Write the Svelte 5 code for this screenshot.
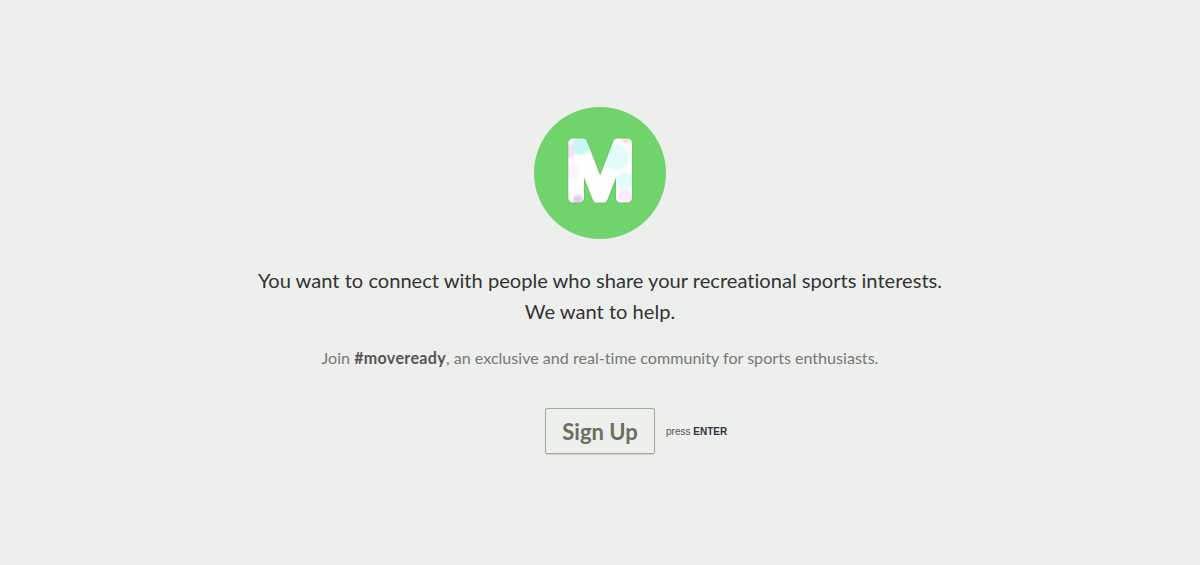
<script lang="ts">
  // Pastel blobs that show through the logo letter
  const blobs = [
    { x: 35, y: 44, r: 7, fill: "#f8e0fb" },
    { x: 47, y: 39, r: 9, fill: "#c6f7f3" },
    { x: 38, y: 64, r: 8, fill: "#fef2fe" },
    { x: 82, y: 50, r: 13, fill: "#e2fcfa" },
    { x: 91, y: 74, r: 9, fill: "#e4fbfb" },
    { x: 44, y: 93, r: 5, fill: "#e0cdf6" },
    { x: 92, y: 91, r: 8, fill: "#fdeafc" },
    { x: 92, y: 32, r: 4, fill: "#fbdfcc" },
    { x: 98, y: 44, r: 6, fill: "#fff6fd" },
  ];
</script>

<main class="page">
  <svg class="logo" viewBox="0 0 132 132" role="img" aria-label="Move logo">
    <defs>
      <mask id="letter">
        <text x="66" y="91" text-anchor="middle" class="letter mask-letter">M</text>
      </mask>
      <filter id="soft"><feGaussianBlur stdDeviation="0.8" /></filter>
    </defs>
    <circle cx="66" cy="66" r="66" fill="#70d36c" />
    <text x="66" y="91" text-anchor="middle" class="letter edge-letter">M</text>
    <g mask="url(#letter)">
      <rect x="20" y="20" width="92" height="92" fill="#fff" />
      <g filter="url(#soft)">
        {#each blobs as b}
          <circle cx={b.x} cy={b.y} r={b.r} fill={b.fill} />
        {/each}
      </g>
    </g>
  </svg>

  <h1 class="headline">
    You want to connect with people who share your recreational sports interests.<br />
    We want to help.
  </h1>

  <p class="sub">
    Join <strong>#moveready</strong>, an exclusive and real-time community for sports enthusiasts.
  </p>

  <div class="cta">
    <button class="signup" type="button">Sign Up</button>
    <span class="hint">press <b>ENTER</b></span>
  </div>
</main>

<style>
  :global(body) {
    margin: 0;
    background: #edefec;
  }

  .page {
    min-height: 565px;
    box-sizing: border-box;
    padding-top: 107px;
    display: flex;
    flex-direction: column;
    align-items: center;
    font-family: Lato, "Noto Sans", sans-serif;
    font-variant-ligatures: none;
  }

  .logo {
    display: block;
    width: 132px;
    height: 132px;
  }

  .letter {
    font-family: Inter, "Liberation Sans", sans-serif;
    font-weight: 400;
    font-size: 75px;
    stroke-linejoin: round;
    stroke-linecap: round;
  }
  .mask-letter {
    fill: #fff;
    stroke: #fff;
    stroke-width: 9px;
  }
  .edge-letter {
    fill: #66c963;
    stroke: #66c963;
    stroke-width: 11px;
  }

  .headline {
    margin: 26px 0 0;
    font-size: 20.1px;
    line-height: 31px;
    font-weight: 400;
    color: #333;
    text-align: center;
  }

  .sub {
    margin: 19px 0 0;
    font-size: 16.1px;
    line-height: 24px;
    color: #777;
    text-align: center;
  }
  .sub strong {
    color: #555;
    font-weight: 700;
    letter-spacing: 0.3px;
  }

  .cta {
    margin-top: 38px;
    width: 100%;
    display: grid;
    grid-template-columns: 1fr auto 1fr;
    align-items: center;
    column-gap: 11px;
  }

  .signup {
    grid-column: 2;
    width: 110px;
    height: 46px;
    padding: 0;
    background: #edefec;
    border: 1px solid #a3a8a0;
    border-radius: 2px;
    box-shadow: 0 1px 1px rgba(0, 0, 0, 0.12);
    font-family: inherit;
    font-size: 22px;
    font-weight: 700;
    color: #68705f;
  }

  .hint {
    font-family: "Liberation Sans", Arial, sans-serif;
    font-size: 10px;
    color: #555;
  }
  .hint b {
    color: #334;
  }
</style>
